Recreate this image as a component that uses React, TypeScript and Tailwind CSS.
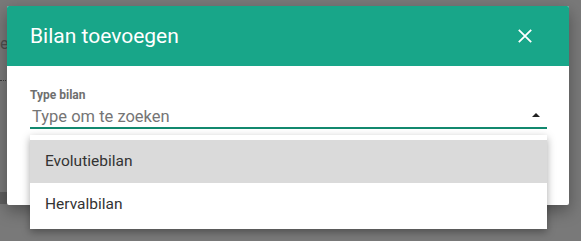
export default function App() {
  return (
    <div className="relative w-[581px] h-[241px] overflow-hidden bg-[#797979] font-['Roboto','Liberation_Sans',sans-serif]">
      {/* page behind the overlay */}
      <div className="pt-[34px] flex flex-col">
        <span className="text-[16px] leading-[20px] text-[#4f4f4f]">e</span>
        <div className="mt-[26px] w-[8px] border-t border-dotted border-[#3a3a3a]" />
        <div className="mt-[111px] w-[8px] h-[12px] bg-[#5e5e5e]" />
      </div>

      {/* dialog */}
      <div className="absolute left-[7px] top-[6px] w-[562px] h-[199px] rounded-[2px] bg-white shadow-[0_6px_16px_rgba(0,0,0,0.35)] overflow-hidden">
        <div className="h-[60px] bg-[#18a689] flex items-center justify-between pl-[23px] pr-[37px]">
          <h2 className="text-[21px] text-white leading-none">Bilan toevoegen</h2>
          <svg width="14" height="14" viewBox="0 0 14 14" className="text-white">
            <path d="M0.8 0.8 L13.2 13.2 M13.2 0.8 L0.8 13.2" stroke="currentColor" strokeWidth="1.8" fill="none" />
          </svg>
        </div>
        <div className="pl-[23px] pr-[22px] pt-[22px] flex flex-col">
          <label className="text-[12px] font-bold text-[#6f6f6f] leading-[14px]">Type bilan</label>
          <div className="mt-[5px] flex items-center border-b-2 border-[#12896f] h-[22px]">
            <span className="flex-1 pl-[2px] text-[16.5px] leading-[20px] text-[#757575]">Type om te zoeken</span>
            <span className="mr-[7px] mb-[4px] w-0 h-0 border-l-[4px] border-r-[4px] border-b-[4px] border-l-transparent border-r-transparent border-b-[#222]" />
          </div>
        </div>
      </div>

      {/* dropdown menu */}
      <div className="absolute left-[30px] top-[135px] w-[517px] bg-white pt-[5px] pb-[3px] shadow-[0_3px_8px_rgba(0,0,0,0.35)] flex flex-col">
        <div className="h-[43px] flex items-center px-[15px] bg-[#dadada] text-[15.5px] text-[#333]">Evolutiebilan</div>
        <div className="h-[43px] flex items-center px-[15px] text-[15.5px] text-[#333]">Hervalbilan</div>
      </div>
    </div>
  );
}
